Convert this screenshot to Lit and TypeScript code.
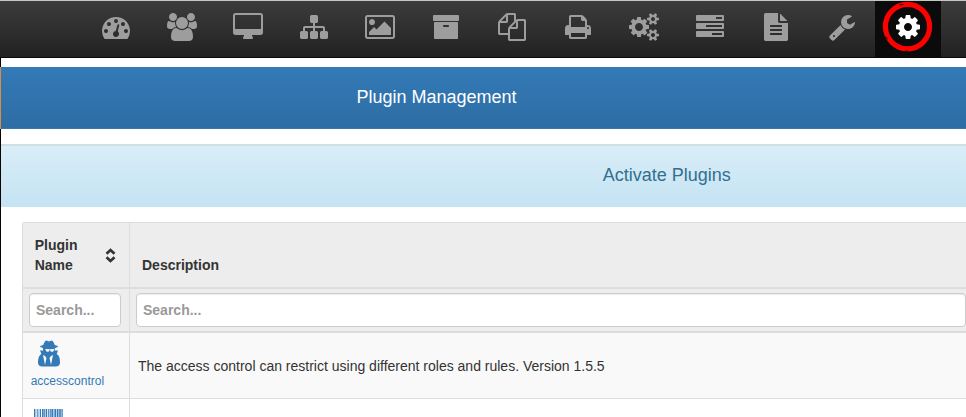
import { LitElement, html, css, svg } from "lit";
import { customElement } from "lit/decorators.js";

interface Icon {
  name: string;
  x: number;
  w: number;
  d: string;
}

const NAV: Icon[] = [
  { name: "Dashboard", x: 0, w: 1792, d: "M384 1152q0-53-37.5-90.5t-90.5-37.5-90.5 37.5-37.5 90.5 37.5 90.5 90.5 37.5 90.5-37.5 37.5-90.5zm192-448q0-53-37.5-90.5t-90.5-37.5-90.5 37.5-37.5 90.5 37.5 90.5 90.5 37.5 90.5-37.5 37.5-90.5zm428 481l101-382q6-26-7.5-48.5t-38.5-29.5-48 6.5-30 39.5l-101 382q-60 5-107 43.5t-63 98.5q-20 77 20 146t117 89 146-20 89-117q16-60-6-117t-72-91zm660-33q0-53-37.5-90.5t-90.5-37.5-90.5 37.5-37.5 90.5 37.5 90.5 90.5 37.5 90.5-37.5 37.5-90.5zm-640-640q0-53-37.5-90.5t-90.5-37.5-90.5 37.5-37.5 90.5 37.5 90.5 90.5 37.5 90.5-37.5 37.5-90.5zm448 192q0-53-37.5-90.5t-90.5-37.5-90.5 37.5-37.5 90.5 37.5 90.5 90.5 37.5 90.5-37.5 37.5-90.5zm320 448q0 261-141 483-19 29-54 29h-1402q-35 0-54-29-141-221-141-483 0-182 71-348t191-286 286-191 348-71 348 71 286 191 191 286 71 348z" },
  { name: "Users", x: 0, w: 1920, d: "M593 896q-162 5-265 128h-134q-82 0-138-40.5t-56-118.5q0-353 124-353 6 0 43.5 21t97.5 42.5 119 21.5q67 0 133-23-5 37-5 66 0 139 81 256zm1071 637q0 120-73 189.5t-194 69.5h-874q-121 0-194-69.5t-73-189.5q0-53 3.5-103.5t14-109 26.5-108.5 43-97.5 62-81 85.5-53.5 111.5-20q10 0 43 21.5t73 48 107 48 135 21.5 135-21.5 107-48 73-48 43-21.5q61 0 111.5 20t85.5 53.5 62 81 43 97.5 26.5 108.5 14 109 3.5 103.5zm-1024-1277q0 106-75 181t-181 75-181-75-75-181 75-181 181-75 181 75 75 181zm704 384q0 159-112.5 271.5t-271.5 112.5-271.5-112.5-112.5-271.5 112.5-271.5 271.5-112.5 271.5 112.5 112.5 271.5zm576 225q0 78-56 118.5t-138 40.5h-134q-103-123-265-128 81-117 81-256 0-29-5-66 66 23 133 23 59 0 119-21.5t97.5-42.5 43.5-21q124 0 124 353zm-128-609q0 106-75 181t-181 75-181-75-75-181 75-181 181-75 181 75 75 181z" },
  { name: "Assets", x: 64, w: 1920, d: "M1856 992v-832q0-13-9.5-22.5t-22.5-9.5h-1600q-13 0-22.5 9.5t-9.5 22.5v832q0 13 9.5 22.5t22.5 9.5h1600q13 0 22.5-9.5t9.5-22.5zm128-832v1088q0 66-47 113t-113 47h-544q0 37 16 77.5t32 71 16 43.5q0 26-19 45t-45 19h-512q-26 0-45-19t-19-45q0-14 16-44t32-70 16-78h-544q-66 0-113-47t-47-113v-1088q0-66 47-113t113-47h1600q66 0 113 47t47 113z" },
  { name: "Groups", x: 0, w: 1792, d: "M1792 1248v320q0 40-28 68t-68 28h-320q-40 0-68-28t-28-68v-320q0-40 28-68t68-28h96v-192h-512v192h96q40 0 68 28t28 68v320q0 40-28 68t-68 28h-320q-40 0-68-28t-28-68v-320q0-40 28-68t68-28h96v-192h-512v192h96q40 0 68 28t28 68v320q0 40-28 68t-68 28h-320q-40 0-68-28t-28-68v-320q0-40 28-68t68-28h96v-192q0-52 38-90t90-38h512v-192h-96q-40 0-68-28t-28-68v-320q0-40 28-68t68-28h320q40 0 68 28t28 68v320q0 40-28 68t-68 28h-96v192h512q52 0 90 38t38 90v192h96q40 0 68 28t28 68z" },
  { name: "Images", x: -64, w: 1920, d: "M576 576q0 80-56 136t-136 56-136-56-56-136 56-136 136-56 136 56 56 136zm1024 384v448h-1408v-192l320-320 160 160 512-512zm96-704h-1600q-13 0-22.5 9.5t-9.5 22.5v1216q0 13 9.5 22.5t22.5 9.5h1600q13 0 22.5-9.5t9.5-22.5v-1216q0-13-9.5-22.5t-22.5-9.5zm160 32v1216q0 66-47 113t-113 47h-1600q-66 0-113-47t-47-113v-1216q0-66 47-113t113-47h1600q66 0 113 47t47 113z" },
  { name: "Storage", x: 0, w: 1792, d: "M1088 832q0-26-19-45t-45-19h-256q-26 0-45 19t-19 45 19 45 45 19h256q26 0 45-19t19-45zm576-192v960q0 26-19 45t-45 19h-1408q-26 0-45-19t-19-45v-960q0-26 19-45t45-19h1408q26 0 45 19t19 45zm64-448v256q0 26-19 45t-45 19h-1536q-26 0-45-19t-19-45v-256q0-26 19-45t45-19h1536q26 0 45 19t19 45z" },
  { name: "Snapins", x: 0, w: 1792, d: "M1696 384q40 0 68 28t28 68v1216q0 40-28 68t-68 28h-960q-40 0-68-28t-28-68v-288h-544q-40 0-68-28t-28-68v-672q0-40 20-88t48-76l408-408q28-28 76-48t88-20h416q40 0 68 28t28 68v328q68-40 128-40h416zm-544 213l-299 299h299v-299zm-640-384l-299 299h299v-299zm196 647l316-316v-416h-384v416q0 40-28 68t-68 28h-416v640h512v-256q0-40 20-88t48-76zm956 804v-1152h-384v416q0 40-28 68t-68 28h-416v640h896z" },
  { name: "Printers", x: 0, w: 1792, d: "M448 1536h896v-256h-896v256zm0-640h896v-384h-160q-40 0-68-28t-28-68v-160h-640v640zm1152 64q0-26-19-45t-45-19-45 19-19 45 19 45 45 19 45-19 19-45zm128 0v416q0 13-9.5 22.5t-22.5 9.5h-224v160q0 40-28 68t-68 28h-960q-40 0-68-28t-28-68v-160h-224q-13 0-22.5-9.5t-9.5-22.5v-416q0-79 56.5-135.5t135.5-56.5h64v-544q0-40 28-68t68-28h672q40 0 88 20t76 48l152 152q28 28 48 76t20 88v256h64q79 0 135.5 56.5t56.5 135.5z" },
  { name: "Services", x: -64, w: 1920, d: "M832 896q0-106-75-181t-181-75-181 75-75 181 75 181 181 75 181-75 75-181zm768 512q0-52-38-90t-90-38-90 38-38 90q0 53 37.5 90.5t90.5 37.5 90.5-37.5 37.5-90.5zm0-1024q0-52-38-90t-90-38-90 38-38 90q0 53 37.5 90.5t90.5 37.5 90.5-37.5 37.5-90.5zm-384 421v185q0 10-7 19.5t-16 10.5l-155 24q-11 35-32 76 34 48 90 115 7 11 7 20 0 12-7 19-23 30-82.5 89.5t-78.5 59.5q-11 0-21-7l-115-90q-37 19-77 31-11 108-23 155-7 24-30 24h-186q-11 0-20-7.5t-10-17.5l-23-153q-34-10-75-31l-118 89q-7 7-20 7-11 0-21-8-144-133-144-160 0-9 7-19 10-14 41-53t47-61q-23-44-35-82l-152-24q-10-1-17-9.5t-7-19.5v-185q0-10 7-19.5t16-10.5l155-24q11-35 32-76-34-48-90-115-7-11-7-20 0-12 7-20 22-30 82-89t79-59q11 0 21 7l115 90q34-18 77-32 11-108 23-154 7-24 30-24h186q11 0 20 7.5t10 17.5l23 153q34 10 75 31l118-89q8-7 20-7 11 0 21 8 144 133 144 160 0 8-7 19-12 16-42 54t-45 60q23 48 34 82l152 23q10 2 17 10.5t7 19.5zm640 533v140q0 16-149 31-12 27-30 52 51 113 51 138 0 4-4 7-122 71-124 71-8 0-46-47t-52-68q-20 2-30 2t-30-2q-14 21-52 68t-46 47q-2 0-124-71-4-3-4-7 0-25 51-138-18-25-30-52-149-15-149-31v-140q0-16 149-31 13-29 30-52-51-113-51-138 0-4 4-7 4-2 35-20t59-34 30-16q8 0 46 46.5t52 67.5q20-2 30-2t30 2q51-71 92-112l6-2q4 0 124 70 4 3 4 7 0 25-51 138 17 23 30 52 149 15 149 31zm0-1024v140q0 16-149 31-12 27-30 52 51 113 51 138 0 4-4 7-122 71-124 71-8 0-46-47t-52-68q-20 2-30 2t-30-2q-14 21-52 68t-46 47q-2 0-124-71-4-3-4-7 0-25 51-138-18-25-30-52-149-15-149-31v-140q0-16 149-31 13-29 30-52-51-113-51-138 0-4 4-7 4-2 35-20t59-34 30-16q8 0 46 46.5t52 67.5q20-2 30-2t30 2q51-71 92-112l6-2q4 0 124 70 4 3 4 7 0 25-51 138 17 23 30 52 149 15 149 31z" },
  { name: "Tasks", x: 0, w: 1792, d: "M1024 1408h640v-128h-640v128zm-384-512h1024v-128h-1024v128zm640-512h384v-128h-384v128zm512 832v256q0 26-19 45t-45 19h-1664q-26 0-45-19t-19-45v-256q0-26 19-45t45-19h1664q26 0 45 19t19 45zm0-512v256q0 26-19 45t-45 19h-1664q-26 0-45-19t-19-45v-256q0-26 19-45t45-19h1664q26 0 45 19t19 45zm0-512v256q0 26-19 45t-45 19h-1664q-26 0-45-19t-19-45v-256q0-26 19-45t45-19h1664q26 0 45 19t19 45z" },
  { name: "Reports", x: 0, w: 1792, d: "M1596 476q14 14 28 36h-472v-472q22 14 36 28zm-476 164h544v1056q0 40-28 68t-68 28h-1344q-40 0-68-28t-28-68v-1600q0-40 28-68t68-28h800v544q0 40 28 68t68 28zm160 736v-64q0-14-9-23t-23-9h-704q-14 0-23 9t-9 23v64q0 14 9 23t23 9h704q14 0 23-9t9-23zm0-256v-64q0-14-9-23t-23-9h-704q-14 0-23 9t-9 23v64q0 14 9 23t23 9h704q14 0 23-9t9-23zm0-256v-64q0-14-9-23t-23-9h-704q-14 0-23 9t-9 23v64q0 14 9 23t23 9h704q14 0 23-9t9-23z" },
  { name: "Configuration", x: 0, w: 1792, d: "M448 1472q0-26-19-45t-45-19-45 19-19 45 19 45 45 19 45-19 19-45zm644-420l-682 682q-37 37-90 37-52 0-91-37l-106-108q-38-36-38-90 0-53 38-91l681-681q39 98 114.5 173.5t173.5 114.5zm634-435q0 39-23 106-47 134-164.5 217.5t-258.5 83.5q-185 0-316.5-131.5t-131.5-316.5 131.5-316.5 316.5-131.5q58 0 121.5 16.5t107.5 46.5q16 11 16 28t-16 28l-293 169v224l193 107q5-3 79-48.5t135.5-81 70.5-35.5q15 0 23.5 10t8.5 25z" },
  { name: "Plugins", x: 0, w: 1792, d: "M1152 896q0-106-75-181t-181-75-181 75-75 181 75 181 181 75 181-75 75-181zm512-109v222q0 12-8 23t-20 13l-185 28q-19 54-39 91 35 50 107 138 10 12 10 25t-9 23q-27 37-99 108t-94 71q-12 0-26-9l-138-108q-44 23-91 38-16 136-29 186-7 28-36 28h-222q-14 0-24.5-8.5t-11.5-21.5l-28-184q-49-16-90-37l-141 107q-10 9-25 9-14 0-25-11-126-114-165-168-7-10-7-23 0-12 8-23 15-21 51-66.5t54-70.5q-27-50-41-99l-183-27q-13-2-21-12.5t-8-23.5v-222q0-12 8-23t19-13l186-28q14-46 39-92-40-57-107-138-10-12-10-24 0-10 9-23 26-36 98.5-107.5t94.5-71.5q13 0 26 10l138 107q44-23 91-38 16-136 29-186 7-28 36-28h222q14 0 24.5 8.5t11.5 21.5l28 184q49 16 90 37l142-107q9-9 24-9 13 0 25 10 129 119 165 170 7 8 7 22 0 12-8 23-15 21-51 66.5t-54 70.5q26 50 41 98l183 28q13 2 21 12.5t8 23.5z" },
];

const SECRET = "M704 1536l96-448-96-128-128-64zm384 0l128-640-128 64-96 128zm212-1013q-2-4-4-6-10-8-96-8-70 0-167 19-7 2-21 2t-21-2q-97-19-167-19-86 0-96 8-2 2-4 6 2 18 4 27 2 3 7.5 6.5t7.5 10.5q2 4 7.5 20.5t7 20.5 7.5 17 8.5 17 9 14 12 13.5 14 9.5 17.5 8 20.5 4 24.5 2q36 0 59-12.5t32.5-30 14.5-34.5 11.5-29.5 17.5-12.5h12q11 0 17.5 12.5t11.5 29.5 14.5 34.5 32.5 30 59 12.5q13 0 24.5-2t20.5-4 17.5-8 14-9.5 12-13.5 9-14 8.5-17 7.5-17 7-20.5 7.5-20.5q2-7 7.5-10.5t7.5-6.5q2-9 4-27zm364 853q0 121-73 189t-194 68h-874q-121 0-194-68t-73-189q0-61 4.5-118t19-125.5 37.5-123.5 63.5-103.5 93.5-74.5l-90-220h214q-22-64-22-128 0-12 2-32-194-40-194-96 0-57 210-99 17-62 51.5-134t70.5-114q32-37 76-37 30 0 84 31t84 31 84-31 84-31q44 0 76 37 36 42 70.5 114t51.5 134q210 42 210 99 0 56-194 96 7 81-20 160h214l-82 225q63 33 107.5 96.5t65.5 143.5 29 151.5 8 157.5z";

// [offset, width] of each barcode stripe
const STRIPES = [[0, 1], [1.6, 0.7], [3, 0.7], [4.6, 0.7], [6, 1], [8, 1.6], [10.2, 0.8], [11.6, 1.6], [14.2, 1.2], [16, 0.8], [17.4, 1.6], [19.6, 1], [21, 1.3], [23, 1.5], [25, 0.8], [26.2, 0.9], [27.5, 1.2]];

@customElement("app-root")
export class AppRoot extends LitElement {
  static styles = css`
    :host {
      display: block;
      width: 966px;
      height: 417px;
      overflow: hidden;
      background: #fff;
      color: #333;
      font: 14px/20px "Liberation Sans", Arial, sans-serif;
    }
    * { box-sizing: border-box; }
    svg { display: block; overflow: visible; }
    .nav {
      display: flex;
      height: 58px;
      padding-left: 83px;
      border-top: 1px solid #c3c8c5;
      border-bottom: 1px solid #080808;
      background: linear-gradient(#3c3c3c, #222);
    }
    .item {
      position: relative;
      width: 66px;
      height: 56px;
      padding-top: 12px;
      display: flex;
      justify-content: center;
      align-items: flex-start;
      color: #9d9d9d;
      flex: none;
    }
    .item.active { background: #0b0b0b; color: #fff; }
    .ring { position: absolute; left: 7px; top: 0; }
    .body {
      display: grid;
      grid-template-columns: 1px 1fr;
      height: 359px;
    }
    .edge { background: #0a0303; padding-top: 9px; }
    .mark { height: 62px; background: #d98d45; }
    .main { padding-top: 9px; overflow: hidden; }
    h4 { margin: 0; font-size: 18px; font-weight: 400; line-height: 20px; }
    .primary {
      height: 62px;
      padding: 20px 0 0 355.5px;
      color: #fff;
      background: linear-gradient(#337ab7, #2e6da4);
      border-bottom: 1px solid #337ab7;
    }
    .info {
      height: 63px;
      margin-top: 15px;
      padding: 19px 0 0 601.8px;
      color: #31708f;
      background: linear-gradient(#d9edf7, #c4e3f3);
      border-top: 2px solid #d0dfe3;
    }
    .table {
      display: grid;
      grid-template-columns: 106px 1fr;
      margin: 15px 0 0 21px;
      width: 1000px;
      border: 1px solid #ddd;
      border-top-left-radius: 2px;
    }
    .cell { border-left: 1px solid #ddd; border-bottom: 1px solid #ddd; }
    .cell.first { border-left: 0; }
    .head {
      height: 66px;
      padding: 12px 12px 12px;
      background: #ededed;
      border-bottom-width: 2px;
      display: flex;
      align-items: flex-end;
      justify-content: space-between;
      font-weight: 700;
    }
    .label { width: 60px; margin-left: -0.3px; }
    .sort { margin: 0 1px 12px 0; }
    .filter {
      height: 44px;
      padding: 4px 6px;
      background: #ededed;
      border-bottom-width: 2px;
    }
    input {
      display: block;
      width: 92px;
      height: 34px;
      padding: 0 6px;
      border: 1px solid #ccc;
      border-radius: 4px;
      background: #fff;
      box-shadow: inset 0 1px 1px rgba(0, 0, 0, 0.075);
      font: 700 14px "Liberation Sans", Arial, sans-serif;
    }
    input.wide { width: 830px; }
    input::placeholder { color: #999; opacity: 1; }
    .row { height: 66px; background: #f9f9f9; padding: 8px; }
    .row.desc { padding-top: 23px; }
    .plugin { color: #337ab7; font-size: 12px; line-height: 17px; padding-left: 7.7px; }
    .agent { margin-left: 3px; }
    .name { display: block; margin-top: 4px; }
    .plain { background: #fff; }
    .code { margin: 2px 0 0 3.7px; }
  `;

  private nav(icon: Icon) {
    const active = icon.name === "Plugins";
    return html`<a class="item ${active ? "active" : ""}" aria-label=${icon.name}>
      <svg width=${icon.w / 64} height="28" viewBox="${icon.x} 0 ${icon.w} 1792" fill="currentColor"><path d=${icon.d}></path></svg>
      ${active
        ? html`<svg class="ring" width="52" height="52" viewBox="0 0 52 52" fill="none">
            <ellipse cx="25.5" cy="25.6" rx="22.1" ry="22.2" stroke="#f00" stroke-width="5.200"></ellipse>
            <path d="M17.500 3.800l4-.3M2.800 35.500l3 2.500M23.500 50.200l2-.2" stroke="#0b0b0b" stroke-width="1"></path>
          </svg>`
        : ""}
    </a>`;
  }

  render() {
    return html`
      <nav class="nav">${NAV.map((i) => this.nav(i))}</nav>
      <div class="body">
        <div class="edge"><div class="mark"></div></div>
        <main class="main">
          <div class="primary"><h4>Plugin Management</h4></div>
          <div class="info"><h4>Activate Plugins</h4></div>
          <div class="table">
            <div class="cell first head">
              <span class="label">Plugin Name</span>
              <svg class="sort" width="11" height="15" viewBox="0 0 11 15" fill="none" stroke="#333" stroke-width="2.600">
                <path d="M1.500 5.800l4-3.800 4 3.800M1.500 9.200l4 3.800 4-3.800"></path>
              </svg>
            </div>
            <div class="cell head">Description</div>
            <div class="cell first filter"><input placeholder="Search..." /></div>
            <div class="cell filter"><input class="wide" placeholder="Search..." /></div>
            <div class="cell first row plugin">
              <svg class="agent" width="28" height="28" viewBox="0 0 1792 1792" fill="currentColor"><path d=${SECRET}></path></svg>
              <span class="name">accesscontrol</span>
            </div>
            <div class="cell row desc">The access control can restrict using different roles and rules. Version 1.5.5</div>
            <div class="cell first row plain plugin">
              <svg class="code" width="29" height="24" viewBox="0 0 29 24" fill="currentColor">
                ${STRIPES.map(([x, w]) => svg`<rect x=${x} y="0" width=${w} height="24"></rect>`)}
              </svg>
            </div>
            <div class="cell row plain"></div>
          </div>
        </main>
      </div>
    `;
  }
}
